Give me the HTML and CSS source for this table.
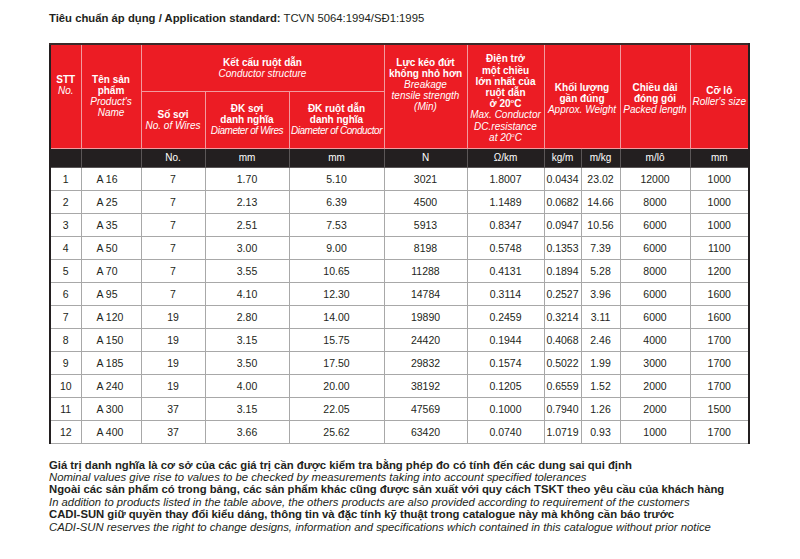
FILE: index.html
```html
<!DOCTYPE html>
<html lang="vi">
<head>
<meta charset="utf-8">
<link rel="stylesheet" href="styles.css">
</head>
<body>
<div class="page">
  <p class="standard"><b>Tiêu chuẩn áp dụng / Application standard:</b> TCVN 5064:1994/SĐ1:1995</p>
  <table class="spec">
    <colgroup>
      <col class="c-stt"><col class="c-name"><col class="c-wires"><col class="c-dw"><col class="c-dc">
      <col class="c-force"><col class="c-res"><col class="c-kgm"><col class="c-mkg"><col class="c-len"><col class="c-roll">
    </colgroup>
    <thead>
      <tr class="h1">
        <th rowspan="2" class="t-stt"><b>STT</b><i>No.</i></th>
        <th rowspan="2" class="t-name"><b>Tên sản<br>phẩm</b><i>Product's<br>Name</i></th>
        <th colspan="3"><b>Kết cấu ruột dẫn</b><i>Conductor structure</i></th>
        <th rowspan="2" class="t-force"><b>Lực kéo đứt<br>không nhỏ hơn</b><i>Breakage<br>tensile strength<br>(Min)</i></th>
        <th rowspan="2" class="t-res"><b>Điện trở<br>một chiều<br>lớn nhất của<br>ruột dẫn<br>ở 20<sup>o</sup>C</b><i>Max. Conductor<br>DC.resistance<br>at 20<sup>o</sup>C</i></th>
        <th rowspan="2" colspan="2" class="t-low"><b>Khối lượng<br>gần đúng</b><i>Approx. Weight</i></th>
        <th rowspan="2" class="t-low"><b>Chiều dài<br>đóng gói</b><i>Packed length</i></th>
        <th rowspan="2"><b>Cỡ lô</b><i>Roller's size</i></th>
      </tr>
      <tr class="h2">
        <th><b>Số sợi</b><i>No. of Wires</i></th>
        <th class="tight"><b>ĐK sợi<br>danh nghĩa</b><i>Diameter of Wires</i></th>
        <th class="tight"><b>ĐK ruột dẫn<br>danh nghĩa</b><i>Diameter of Conductor</i></th>
      </tr>
      <tr class="units">
        <td></td><td></td><td>No.</td><td>mm</td><td>mm</td><td>N</td><td>Ω/km</td><td>kg/m</td><td>m/kg</td><td>m/lô</td><td>mm</td>
      </tr>
    </thead>
    <tbody>
      <tr><td>1</td><td class="name">A 16</td><td>7</td><td>1.70</td><td>5.10</td><td>3021</td><td>1.8007</td><td>0.0434</td><td>23.02</td><td>12000</td><td>1000</td></tr>
      <tr><td>2</td><td class="name">A 25</td><td>7</td><td>2.13</td><td>6.39</td><td>4500</td><td>1.1489</td><td>0.0682</td><td>14.66</td><td>8000</td><td>1000</td></tr>
      <tr><td>3</td><td class="name">A 35</td><td>7</td><td>2.51</td><td>7.53</td><td>5913</td><td>0.8347</td><td>0.0947</td><td>10.56</td><td>6000</td><td>1000</td></tr>
      <tr><td>4</td><td class="name">A 50</td><td>7</td><td>3.00</td><td>9.00</td><td>8198</td><td>0.5748</td><td>0.1353</td><td>7.39</td><td>6000</td><td>1100</td></tr>
      <tr><td>5</td><td class="name">A 70</td><td>7</td><td>3.55</td><td>10.65</td><td>11288</td><td>0.4131</td><td>0.1894</td><td>5.28</td><td>8000</td><td>1200</td></tr>
      <tr><td>6</td><td class="name">A 95</td><td>7</td><td>4.10</td><td>12.30</td><td>14784</td><td>0.3114</td><td>0.2527</td><td>3.96</td><td>6000</td><td>1600</td></tr>
      <tr><td>7</td><td class="name">A 120</td><td>19</td><td>2.80</td><td>14.00</td><td>19890</td><td>0.2459</td><td>0.3214</td><td>3.11</td><td>6000</td><td>1600</td></tr>
      <tr><td>8</td><td class="name">A 150</td><td>19</td><td>3.15</td><td>15.75</td><td>24420</td><td>0.1944</td><td>0.4068</td><td>2.46</td><td>4000</td><td>1700</td></tr>
      <tr><td>9</td><td class="name">A 185</td><td>19</td><td>3.50</td><td>17.50</td><td>29832</td><td>0.1574</td><td>0.5022</td><td>1.99</td><td>3000</td><td>1700</td></tr>
      <tr><td>10</td><td class="name">A 240</td><td>19</td><td>4.00</td><td>20.00</td><td>38192</td><td>0.1205</td><td>0.6559</td><td>1.52</td><td>2000</td><td>1700</td></tr>
      <tr><td>11</td><td class="name">A 300</td><td>37</td><td>3.15</td><td>22.05</td><td>47569</td><td>0.1000</td><td>0.7940</td><td>1.26</td><td>2000</td><td>1500</td></tr>
      <tr><td>12</td><td class="name">A 400</td><td>37</td><td>3.66</td><td>25.62</td><td>63420</td><td>0.0740</td><td>1.0719</td><td>0.93</td><td>1000</td><td>1700</td></tr>
    </tbody>
  </table>
  <div class="notes">
    <p class="vi">Giá trị danh nghĩa là cơ sở của các giá trị cần được kiểm tra bằng phép đo có tính đến các dung sai qui định</p>
    <p class="en">Nominal values give rise to values to be checked by measurements taking into account specified tolerances</p>
    <p class="vi">Ngoài các sản phẩm có trong bảng, các sản phẩm khác cũng được sản xuất với quy cách TSKT theo yêu cầu của khách hàng</p>
    <p class="en">In addition to products listed in the table above, the others products are also provided according to requirement of the customers</p>
    <p class="vi">CADI-SUN giữ quyền thay đổi kiểu dáng, thông tin và đặc tính kỹ thuật trong catalogue này mà không cần báo trước</p>
    <p class="en">CADI-SUN reserves the right to change designs, information and specifications which contained in this catalogue without prior notice</p>
  </div>
</div>
</body>
</html>
```
FILE: styles.css
```css
html, body {
  margin: 0;
  padding: 0;
  background: #ffffff;
}
.page {
  padding: 11px 0 0 49px;
  font-family: "Liberation Sans", Arial, sans-serif;
  color: #231f20;
}
.standard {
  margin: 0 0 18px 0;
  font-size: 11.3px;
  line-height: 14px;
}
.spec {
  border-collapse: collapse;
  table-layout: fixed;
  width: 699px;
  border-top: 2px solid #3a2a2a;
  border-left: 2px solid #231f20;
  border-right: 2px solid #231f20;
  border-bottom: 1px solid #b0b0b0;
}
.c-stt { width: 31px; }
.c-name { width: 60px; }
.c-wires { width: 64px; }
.c-dw { width: 84px; }
.c-dc { width: 95px; }
.c-force { width: 83px; }
.c-res { width: 77px; }
.c-kgm { width: 37px; }
.c-mkg { width: 39px; }
.c-len { width: 70px; }
.c-roll { width: 59px; }

.spec th {
  background: #ec1c24;
  color: #ffffff;
  font-size: 10px;
  line-height: 11px;
  font-weight: normal;
  padding: 0;
  text-align: center;
  vertical-align: middle;
  border: 1px solid #f29a9e;
}
.spec th b, .spec th i {
  display: block;
}
.spec th b { font-weight: bold; }
.spec th sup {
  font-size: 6px;
  line-height: 0;
  vertical-align: 4px;
}
.spec th.tight i {
  white-space: nowrap;
  letter-spacing: -0.45px;
}
.h1 { height: 47px; }
.h2 { height: 57px; }
.spec .t-stt { vertical-align: top; padding-top: 29px; }
.spec .t-name { vertical-align: top; padding-top: 29px; }
.spec .t-force { vertical-align: top; padding-top: 12px; }
.spec .t-res { padding-top: 4px; line-height: 11.2px; }
.spec .t-low { padding-top: 5px; }

.units { height: 19px; }
.units td {
  background: #231f20;
  color: #ffffff;
  font-size: 10px;
  text-align: center;
  padding: 0;
  border: 1px solid #5a5657;
  border-top: none;
}
.spec tbody tr { height: 23px; }
.spec tbody td {
  font-size: 10.5px;
  text-align: center;
  padding: 0;
  border: 1px solid #a8a8a8;
  color: #231f20;
}
.spec tbody td.name {
  text-align: left;
  padding-left: 15px;
}
.notes {
  margin-top: 15px;
  font-size: 11.3px;
  line-height: 12.4px;
}
.notes p { margin: 0; }
.notes .vi { font-weight: bold; }
.notes .en { font-style: italic; }
```
